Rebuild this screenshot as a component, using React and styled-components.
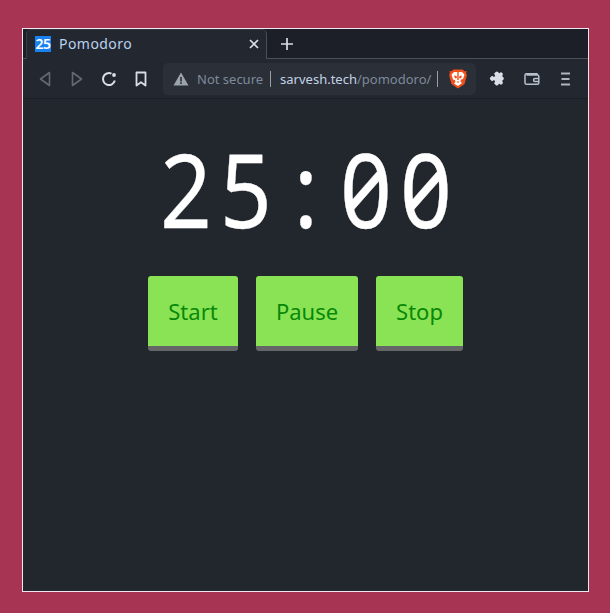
import React from "react";
import styled, { createGlobalStyle } from "styled-components";
import { IoExtensionPuzzle } from "react-icons/io5";

const GlobalStyle = createGlobalStyle`
  html, body {
    margin: 0;
    padding: 0;
    background: #a83454;
  }
`;

const Page = styled.div`
  width: 610px;
  height: 613px;
  padding: 28px 21px 21px 22px;
  box-sizing: border-box;
  background: #a83454;
`;

const Window = styled.div`
  width: 567px;
  height: 564px;
  box-sizing: border-box;
  border: 1px solid #f4e6ee;
  display: flex;
  flex-direction: column;
  background: #22272e;
  font-family: "Noto Sans", sans-serif;
`;

const TabStrip = styled.div`
  height: 30px;
  flex: none;
  display: flex;
  background: #1c1f28;
  box-sizing: border-box;
  padding-left: 3px;
  border-bottom: 1px solid #4c4f56;
`;

const Tab = styled.div`
  width: 241px;
  height: 30px;
  box-sizing: border-box;
  display: flex;
  align-items: center;
  padding: 0 6px 2px 8px;
  background: #232730;
  border: 1px solid #4c4f56;
  border-bottom: none;
  border-left-color: #3a3d45;
  border-radius: 5px 5px 0 0;
  border-top-color: #33363e;
`;

const Favicon = styled.div`
  width: 16px;
  height: 16px;
  background: #1a82f0;
  color: #fff;
  font: 600 14px/16px "Noto Sans", sans-serif;
  letter-spacing: -0.4px;
  text-align: center;
  flex: none;
`;

const TabTitle = styled.span`
  margin-left: 8px;
  flex: 1;
  color: #b9d2ee;
  font-size: 14px;
  letter-spacing: 0.45px;
`;

const IconButton = styled.button`
  flex: none;
  width: ${(p) => p.$size || 20}px;
  height: ${(p) => p.$size || 20}px;
  margin: 0;
  padding: 0;
  border: 0;
  background: none;
  color: ${(p) => p.$color || "#d8dde6"};
  display: flex;
  align-items: center;
  justify-content: center;
  svg {
    flex: none;
  }
`;

const NewTab = styled(IconButton)`
  margin: 0 0 0 10px;
  align-self: center;
`;

const Toolbar = styled.div`
  height: 40px;
  flex: none;
  box-sizing: border-box;
  display: flex;
  align-items: center;
  padding: 0 0 0 12px;
  background: #232730;
  border-bottom: 1px solid #1b1e25;
`;

const NavGroup = styled.div`
  display: flex;
  align-items: center;
  gap: 12px;
`;

const AddressBar = styled.div`
  width: 313px;
  height: 32px;
  margin: 0 0 0 12px;
  flex: none;
  box-sizing: border-box;
  display: flex;
  align-items: center;
  padding: 0 9px 0 10px;
  background: #2b2f38;
  border-radius: 5px;
  font-size: 13px;
  white-space: nowrap;
  svg {
    flex: none;
  }
`;

const NotSecure = styled.span`
  margin-left: 8px;
  color: #7e8a99;
`;

const Divider = styled.span`
  width: 1px;
  height: 16px;
  background: #9a9ea6;
  margin: ${(p) => p.$margin};
  flex: none;
`;

const Host = styled.span`
  color: #c3d2e6;
`;

const UrlPath = styled.span`
  color: #7e8a99;
`;

const ToolActions = styled.div`
  display: flex;
  align-items: center;
  margin-left: 12px;
  gap: 14px;
`;

const PuzzleGlyph = styled(IoExtensionPuzzle)`
  width: 15px;
  height: 15px;
  transform: rotate(45deg);
`;

const Content = styled.main`
  flex: 1;
  display: flex;
  flex-direction: column;
  align-items: center;
  padding-top: 31px;
`;

const Timer = styled.div`
  font-family: "Noto Sans", sans-serif;
  font-variant-numeric: slashed-zero;
  font-size: 103px;
  line-height: 117px;
  color: #fff;
  -webkit-text-stroke: 0.3px #fff;
  white-space: nowrap;
  display: flex;
`;

const TimerCell = styled.span`
  width: 60px;
  text-align: center;
  transform: scaleX(0.88);
`;

const Buttons = styled.div`
  display: flex;
  gap: 18px;
  margin-top: 29px;
`;

const ActionButton = styled.button`
  width: ${(p) => p.$width}px;
  height: 75px;
  box-sizing: border-box;
  padding: 0;
  border: 0;
  border-bottom: 5px solid #656668;
  border-radius: 3px;
  background: #8ae354;
  color: #088808;
  font-family: "Noto Sans", sans-serif;
  font-size: 22px;
`;

const BackIcon = () => (
  <svg width="14" height="16" viewBox="0 0 14 16" fill="none" stroke="currentColor" strokeWidth="1.6" strokeLinejoin="round">
    <path d="M11.5 1.5v13L2.5 8z" />
  </svg>
);

const ForwardIcon = () => (
  <svg width="14" height="16" viewBox="0 0 14 16" fill="none" stroke="currentColor" strokeWidth="1.6" strokeLinejoin="round">
    <path d="M2.5 1.5v13l9-6.500z" />
  </svg>
);

const ReloadIcon = () => (
  <svg width="16" height="16" viewBox="0 0 16 16" fill="none" stroke="currentColor" strokeWidth="2">
    <path d="M13.800 9.500A6 6 0 1 1 10.500 2.600" />
    <circle cx="13" cy="4" r="1.900" fill="currentColor" stroke="none" />
  </svg>
);

const BookmarkIcon = () => (
  <svg width="12" height="16" viewBox="0 0 12 16" fill="none" stroke="currentColor" strokeWidth="1.800" strokeLinejoin="round">
    <path d="M1.500 1.500h9v13L6 11.200 1.500 14.500z" />
  </svg>
);

const WarningIcon = () => (
  <svg width="16" height="14" viewBox="0 0 16 14">
    <path fillRule="evenodd" fill="#9ba3ad" d="M8 0.500l7.500 13H0.500zM7.200 5v4.500h1.600V5zM7.200 10.300v1.600h1.600v-1.600z" />
  </svg>
);

const BraveIcon = () => (
  <svg width="18" height="20" viewBox="0 0 18 20">
    <path fill="#f0501a" d="M4.500 0.500h9l2 1.800 2 -0.300 -0.300 2 .6 2.500L15.500 15l-6.500 4.500L2.500 15 .2 6.500l.6-2.500L.5 2l2 .3z" />
    <path fill="#fff" d="M5 3h8l2.500 2.500-1.500 4.500-2 .5-.5 2 1.500 1.500L9 17l-4-2.500 1.500-1.500-.5-2-2-.5L2.500 5.500z" />
    <path fill="#f0501a" d="M5 6.500l2.500.5.500 2-2 .5zM13 6.500l-2.500.5-.5 2 2 .5zM8.300 3h1.400v8H8.300z" />
    <path fill="#f0501a" d="M7.500 12.500h3L9 14z" />
  </svg>
);

const WalletIcon = () => (
  <svg width="16" height="14" viewBox="0 0 16 14" fill="none" stroke="currentColor" strokeWidth="1.500">
    <path d="M13 3V1.800H2.500A1.500 1.500 0 0 0 1 3.300v7.400c0 1 .7 1.600 1.600 1.600H13.500a1.300 1.300 0 0 0 1.300-1.300V4.300A1.300 1.300 0 0 0 13.500 3H2.500" />
    <path d="M15 6.500h-4a1.500 1.500 0 0 0 0 3h4" />
  </svg>
);

const MenuIcon = () => (
  <svg width="12" height="14" viewBox="0 0 12 14" stroke="#aeb4c0" strokeWidth="1.800">
    <path d="M1 1.500h9M1.500 7h8M1 12.500h9" />
  </svg>
);

const CloseIcon = () => (
  <svg width="10" height="10" viewBox="0 0 10 10" stroke="currentColor" strokeWidth="1.700">
    <path d="M1 1l8 8M9 1l-8 8" />
  </svg>
);

const PlusIcon = () => (
  <svg width="14" height="14" viewBox="0 0 14 14" stroke="currentColor" strokeWidth="1.700">
    <path d="M7 1v12M1 7h12" />
  </svg>
);

function App() {
  return (
    <Page>
      <GlobalStyle />
      <Window>
        <TabStrip>
          <Tab>
            <Favicon>25</Favicon>
            <TabTitle>Pomodoro</TabTitle>
            <IconButton $size={12}>
              <CloseIcon />
            </IconButton>
          </Tab>
          <NewTab>
            <PlusIcon />
          </NewTab>
        </TabStrip>
        <Toolbar>
          <NavGroup>
            <IconButton $color="#636973">
              <BackIcon />
            </IconButton>
            <IconButton $color="#636973">
              <ForwardIcon />
            </IconButton>
            <IconButton>
              <ReloadIcon />
            </IconButton>
            <IconButton>
              <BookmarkIcon />
            </IconButton>
          </NavGroup>
          <AddressBar>
            <WarningIcon />
            <NotSecure>Not secure</NotSecure>
            <Divider $margin="0 9px 0 7px" />
            <Host>sarvesh.tech</Host>
            <UrlPath>/pomodoro/</UrlPath>
            <Divider $margin="0 11px 0 6px" />
            <BraveIcon />
          </AddressBar>
          <ToolActions>
            <IconButton>
              <PuzzleGlyph />
            </IconButton>
            <IconButton $color="#b8bfcc">
              <WalletIcon />
            </IconButton>
            <IconButton>
              <MenuIcon />
            </IconButton>
          </ToolActions>
        </Toolbar>
        <Content>
          <Timer>
            {"25:00".split("").map((ch, i) => (
              <TimerCell key={i}>{ch}</TimerCell>
            ))}
          </Timer>
          <Buttons>
            <ActionButton $width={90}>Start</ActionButton>
            <ActionButton $width={102}>Pause</ActionButton>
            <ActionButton $width={87}>Stop</ActionButton>
          </Buttons>
        </Content>
      </Window>
    </Page>
  );
}

export default App;
